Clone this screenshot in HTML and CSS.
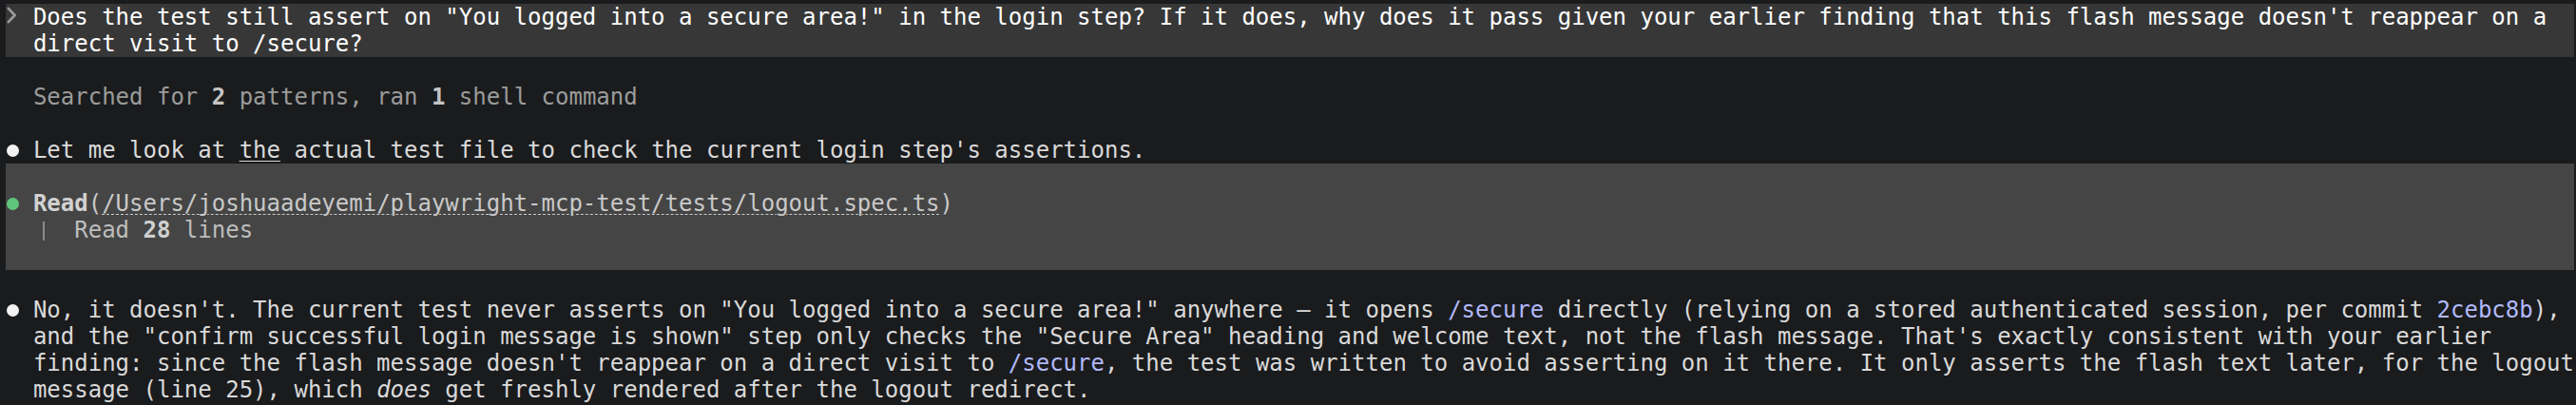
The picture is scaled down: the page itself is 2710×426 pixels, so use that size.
FILE: index.html
```html
<!DOCTYPE html>
<html lang="en">
<head>
<meta charset="utf-8">
<title>Terminal</title>
<link rel="stylesheet" href="styles.css">
</head>
<body>
<div class="term">
  <div class="prompt">
    <div class="gutter"><svg class="chev" width="11" height="18" viewBox="0 0 11 18"><polyline points="1.8,1.8 8.6,9 1.8,16.2" fill="none" stroke="#9a9a9a" stroke-width="2.6" stroke-linecap="round" stroke-linejoin="round"/></svg></div>
    <div class="lines">
      <div class="line">Does the test still assert on "You logged into a secure area!" in the login step? If it does, why does it pass given your earlier finding that this flash message doesn't reappear on a</div>
      <div class="line">direct visit to /secure?</div>
    </div>
  </div>
  <div class="blank"></div>
  <div class="msg muted">
    <div class="gutter"></div>
    <div class="lines"><div class="line">Searched for <b>2</b> patterns, ran <b>1</b> shell command</div></div>
  </div>
  <div class="blank"></div>
  <div class="msg">
    <div class="gutter"><span class="dot"></span></div>
    <div class="lines"><div class="line">Let me look at <u>the</u> actual test file to check the current login step's assertions.</div></div>
  </div>
  <div class="tool">
    <div class="blank"></div>
    <div class="msg">
      <div class="gutter"><span class="dot green"></span></div>
      <div class="lines"><div class="line"><b class="tname">Read</b>(<span class="path">/Users/joshuaadeyemi/playwright-mcp-test/tests/logout.spec.ts</span>)</div></div>
    </div>
    <div class="msg sub">
      <div class="gutter"></div>
      <div class="lines"><div class="line"><span class="elbow"></span>  Read <b>28</b> lines</div></div>
    </div>
    <div class="blank"></div>
  </div>
  <div class="blank"></div>
  <div class="msg">
    <div class="gutter"><span class="dot"></span></div>
    <div class="lines">
      <div class="line">No, it doesn't. The current test never asserts on "You logged into a secure area!" anywhere — it opens <span class="link">/secure</span> directly (relying on a stored authenticated session, per commit <span class="link">2cebc8b</span>),</div>
      <div class="line">and the "confirm successful login message is shown" step only checks the "Secure Area" heading and welcome text, not the flash message. That's exactly consistent with your earlier</div>
      <div class="line">finding: since the flash message doesn't reappear on a direct visit to <span class="link">/secure</span>, the test was written to avoid asserting on it there. It only asserts the flash text later, for the logout</div>
      <div class="line">message (line 25), which <i>does</i> get freshly rendered after the logout redirect.</div>
    </div>
  </div>
</div>
</body>
</html>
```
FILE: styles.css
```css
html, body {
  margin: 0;
  padding: 0;
  background: #1a1b1d;
}
.term {
  padding: 4px 2px 0 6px;
  font-family: "DejaVu Sans Mono", "Liberation Mono", monospace;
  font-size: 24px;
  line-height: 28px;
  color: #d9d9d9;
}
.prompt {
  display: flex;
  background: #373737;
  color: #ffffff;
}
.msg {
  display: flex;
}
.gutter {
  flex: 0 0 2ch;
  width: 2ch;
  height: 28px;
  display: flex;
  align-items: center;
}
.chev {
  display: block;
  margin-left: 1px;
  margin-top: -4px;
}
.lines {
  flex: 1 1 auto;
  min-width: 0;
}
.line {
  height: 28px;
  white-space: pre;
}
.blank {
  height: 28px;
}
.muted {
  color: #9b9b9b;
}
.muted b {
  color: #c4c4c4;
}
b {
  font-weight: bold;
}
.dot {
  display: block;
  width: 13px;
  height: 13px;
  margin-left: 1px;
  border-radius: 50%;
  background: #f2f2f2;
}
.dot.green {
  background: #5fc57a;
}
.tool {
  background: #454545;
  color: #c9c9c9;
}
.tname {
  color: #d2d2d2;
}
.path {
  text-decoration: underline dashed;
  text-decoration-thickness: 1px;
  text-underline-offset: 3px;
}
.sub {
  color: #bdbdbd;
}
.sub b {
  color: #cfcfcf;
}
.elbow {
  display: inline-block;
  width: 1ch;
  height: 28px;
  vertical-align: top;
  background: linear-gradient(#8a8a8a, #8a8a8a) no-repeat 10px 5px / 2px 20px;
}
u {
  text-decoration-thickness: 1px;
  text-underline-offset: 3px;
}
.link {
  color: #b1b9f9;
}
```
